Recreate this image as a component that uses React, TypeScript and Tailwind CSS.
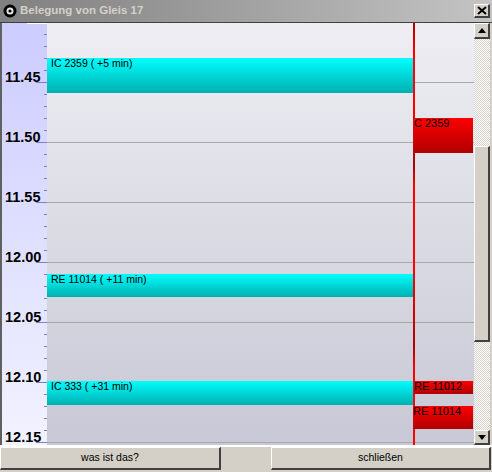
const TICKS = Array.from({ length: 36 }, (_, i) => 34 + i * 12);
const MAJOR = [
  { y: 82, label: "11.45" },
  { y: 142, label: "11.50" },
  { y: 202, label: "11.55" },
  { y: 262, label: "12.00" },
  { y: 322, label: "12.05" },
  { y: 382, label: "12.10" },
  { y: 442, label: "12.15" },
];

const CYAN = [
  { top: 58, height: 35, label: "IC 2359 ( +5 min)" },
  { top: 274, height: 23, label: "RE 11014 ( +11 min)" },
  { top: 381, height: 24, label: "IC 333 ( +31 min)" },
];

const RED = [
  { top: 118, height: 35, left: 414, label: "C 2359" },
  { top: 381, height: 13, left: 414, label: "RE 11012" },
  { top: 406, height: 23, left: 413, label: "RE 11014" },
];

const OFFSET = 23;

const Bevel = "border-t border-l border-r-2 border-b-2 border-t-white border-l-white border-r-[#404040] border-b-[#404040] bg-[#d4d0c8]";

export default function App() {
  return (
    <div className="w-[492px] h-[472px] flex flex-col overflow-hidden bg-[#d4d0c8] font-['Liberation_Sans',sans-serif]">
      <div className="h-[23px] flex items-center bg-gradient-to-r from-[#808080] to-[#c4c4c4] pl-[3px] pr-[2px] border-b border-[#404040]">
        <svg width="14" height="14" viewBox="0 0 14 14" className="mr-[3px] shrink-0">
          <circle cx="7" cy="7" r="6.5" fill="#000" />
          <circle cx="7" cy="7" r="3.5" fill="#e8e8e8" />
          <circle cx="7" cy="7" r="1.6" fill="#000" />
        </svg>
        <span className="text-[11.5px] font-bold text-[#d4d0c8]">Belegung von Gleis 17</span>
        <div className={`ml-auto w-[16px] h-[14px] flex items-center justify-center ${Bevel}`}>
          <svg width="10" height="9" viewBox="0 0 10 9">
            <path d="M1 1 L9 8 M9 1 L1 8" stroke="#000" strokeWidth="2" />
          </svg>
        </div>
      </div>

      <div className="h-[422px] flex border-l-2 border-[#606060]">
        <div className="relative w-[472px] overflow-hidden flex">
          <div className="w-[45px] h-full bg-gradient-to-b from-[#ccccff] to-[#f2f2ff]" />
          <div className="flex-1 h-full bg-gradient-to-b from-[#eeeef3] to-[#c8c8d6]" />

          <div className="absolute left-[25px] w-[20px] top-0 h-px bg-white" />
          {TICKS.map((y) => (
            <div key={y} className="absolute left-[42px] w-[3px] h-px bg-[#8080c0]" style={{ top: y - OFFSET }} />
          ))}
          {MAJOR.map((m) => (
            <div key={m.y}>
              <div className="absolute left-[34px] w-[11px] h-px bg-[#8080c0]" style={{ top: m.y - OFFSET }} />
              <div className="absolute left-[45px] right-0 h-px bg-[#a8a8a8]" style={{ top: m.y - OFFSET }} />
              <div
                className="absolute left-[3px] text-[14.5px] leading-[16px] font-bold text-black"
                style={{ top: m.y - OFFSET - 13 }}
              >
                {m.label}
              </div>
            </div>
          ))}

          {CYAN.map((b) => (
            <div
              key={b.top}
              className="absolute left-[45px] w-[366px] bg-gradient-to-b from-[#00ffff] to-[#00b0b0] pl-[4px] text-[10.5px] leading-[10px] text-black whitespace-nowrap"
              style={{ top: b.top - OFFSET, height: b.height }}
            >
              {b.label}
            </div>
          ))}

          <div className="absolute left-[411px] top-0 bottom-0 w-[2px] bg-[linear-gradient(to_bottom,#b00000_0,#ff0000_30px,#ff0000_80px,#b00000_142px,#ff0000_165px,#ff0000_250px,#b00000_322px,#ff0000_345px,#ff0000_100%)]" />

          {RED.map((b) => (
            <div
              key={b.top}
              className="absolute bg-gradient-to-b from-[#ff0000] to-[#b00000] text-[11px] leading-[10px] text-black whitespace-nowrap overflow-hidden"
              style={{ top: b.top - OFFSET, height: b.height, left: b.left - 2, width: 473 - b.left }}
            >
              {b.label}
            </div>
          ))}
        </div>

        <div className="w-[16px] h-full flex flex-col bg-[repeating-conic-gradient(#d4d0c8_0_25%,#ffffff_0_50%)] bg-[length:2px_2px]">
          <div className={`h-[16px] flex items-center justify-center shrink-0 ${Bevel}`}>
            <svg width="8" height="5" viewBox="0 0 8 5"><path d="M4 0 L8 5 L0 5 Z" fill="#000" /></svg>
          </div>
          <div className="h-[107px] shrink-0" />
          <div className={`h-[196px] shrink-0 ${Bevel}`} />
          <div className="flex-1" />
          <div className={`h-[15px] flex items-center justify-center shrink-0 ${Bevel}`}>
            <svg width="8" height="5" viewBox="0 0 8 5"><path d="M4 5 L8 0 L0 0 Z" fill="#000" /></svg>
          </div>
        </div>
      </div>

      <div className="flex-1 flex border-t-2 border-white pb-[2px] pr-[1px] text-[10.5px] text-black">
        <button className={`w-[221px] h-full ${Bevel}`}>was ist das?</button>
        <div className="w-[50px] h-full" />
        <button className={`flex-1 h-full ${Bevel}`}>schließen</button>
      </div>
    </div>
  );
}
